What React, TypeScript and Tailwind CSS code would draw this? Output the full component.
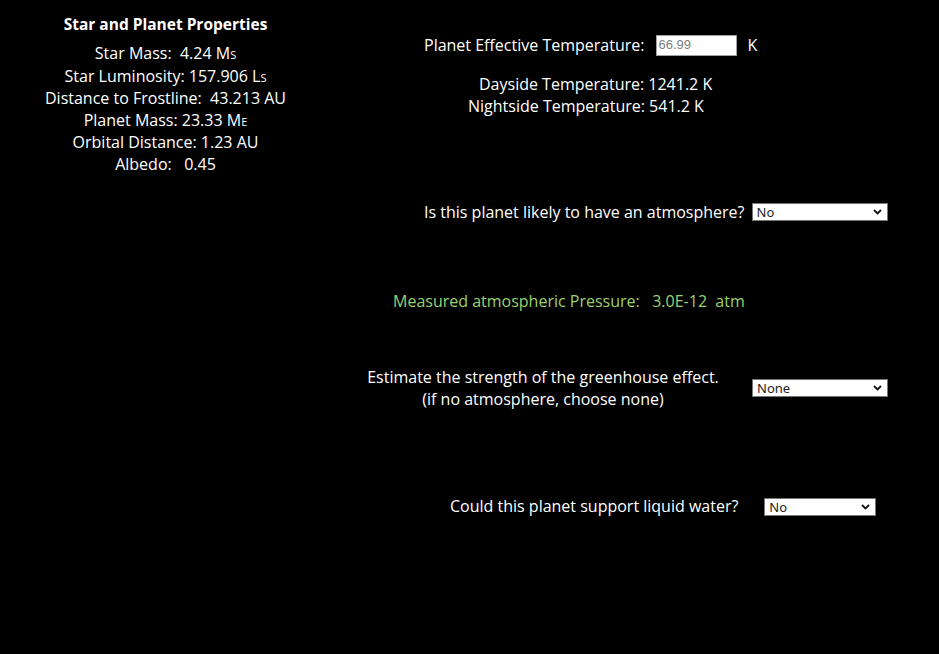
import React, {useState} from 'react'

const Sub = ({children}: {children: React.ReactNode}) => (
  <span className="text-[11px]">{children}</span>
)

const Select = ({
  options,
  width,
  value,
  onChange,
}: {
  options: string[]
  width: string
  value: string
  onChange: (v: string) => void
}) => (
  <div className={`relative h-[18px] ${width}`}>
    <select
      value={value}
      onChange={(e) => onChange(e.target.value)}
      className="appearance-none block w-full h-full bg-white text-[#222] border border-[#767676] pl-[4px] py-0 text-[13px] leading-[16px] font-['Noto_Sans',sans-serif] outline-none"
    >
      {options.map((o) => (
        <option key={o}>{o}</option>
      ))}
    </select>
    <svg
      className="absolute right-[6px] top-[6px] pointer-events-none"
      width="9"
      height="6"
      viewBox="0 0 9 6"
    >
      <path d="M1 1l3.5 3.5L8 1" fill="none" stroke="#111" strokeWidth="1.8" />
    </svg>
  </div>
)

const App = () => {
  const [atmosphere, setAtmosphere] = useState('No')
  const [greenhouse, setGreenhouse] = useState('None')
  const [water, setWater] = useState('No')

  return (
    <div className="w-[939px] h-[654px] bg-black text-white flex font-['Open_Sans',sans-serif] text-[16px] leading-[22px]">
      {/* properties */}
      <div className="w-[331px] text-center pt-[13px]">
        <div className="font-bold text-[15.5px]">Star and Planet Properties</div>
        <div className="mt-[8px] leading-[21.6px]">
          <div>Star Mass:&nbsp; 4.24 M<Sub>S</Sub></div>
          <div>Star Luminosity: 157.906 L<Sub>S</Sub></div>
          <div>Distance to Frostline:&nbsp; 43.213 AU</div>
          <div>Planet Mass: 23.33 M<Sub>E</Sub></div>
          <div>Orbital Distance: 1.23 AU</div>
          <div>Albedo:&nbsp;&nbsp; 0.45</div>
        </div>
      </div>

      {/* questions */}
      <div className="flex-1">
        <div className="mt-[34px] ml-[93px] flex items-center h-[22px]">
          <span>Planet Effective Temperature:</span>
          <input
            readOnly
            value="66.99"
            className="ml-[12px] w-[81px] h-[21px] bg-white border border-[#a0a0a0] text-[#808080] text-[13px] pl-[1px] font-['Liberation_Sans',sans-serif] outline-none"
          />
          <span className="ml-[10px]">K</span>
        </div>

        <div className="mt-[17px] ml-[148px]">Dayside Temperature: 1241.2 K</div>
        <div className="ml-[137px]">Nightside Temperature: 541.2 K</div>

        <div className="mt-[84px] ml-[93px] flex items-center h-[22px]">
          <span>Is this planet likely to have an atmosphere?</span>
          <div className="ml-[7px]">
            <Select options={['No', 'Yes']} width="w-[136px]" value={atmosphere} onChange={setAtmosphere} />
          </div>
        </div>

        <div className="mt-[67px] ml-[62px] text-[#9bd06e]">
          Measured atmospheric Pressure:&nbsp;&nbsp; 3.0E-12&nbsp; atm
        </div>

        <div className="mt-[54px] ml-[36px] flex items-center">
          <div className="text-center w-[352px]">
            <div>Estimate the strength of the greenhouse effect.</div>
            <div>(if no atmosphere, choose none)</div>
          </div>
          <div className="ml-[33px]">
            <Select
              options={['None', 'Weak', 'Moderate', 'Strong']}
              width="w-[136px]"
              value={greenhouse}
              onChange={setGreenhouse}
            />
          </div>
        </div>

        <div className="mt-[85px] ml-[119px] flex items-center h-[22px]">
          <span>Could this planet support liquid water?</span>
          <div className="ml-[26px] mt-[2px]">
            <Select options={['No', 'Yes']} width="w-[112px]" value={water} onChange={setWater} />
          </div>
        </div>
      </div>
    </div>
  )
}

export default App
